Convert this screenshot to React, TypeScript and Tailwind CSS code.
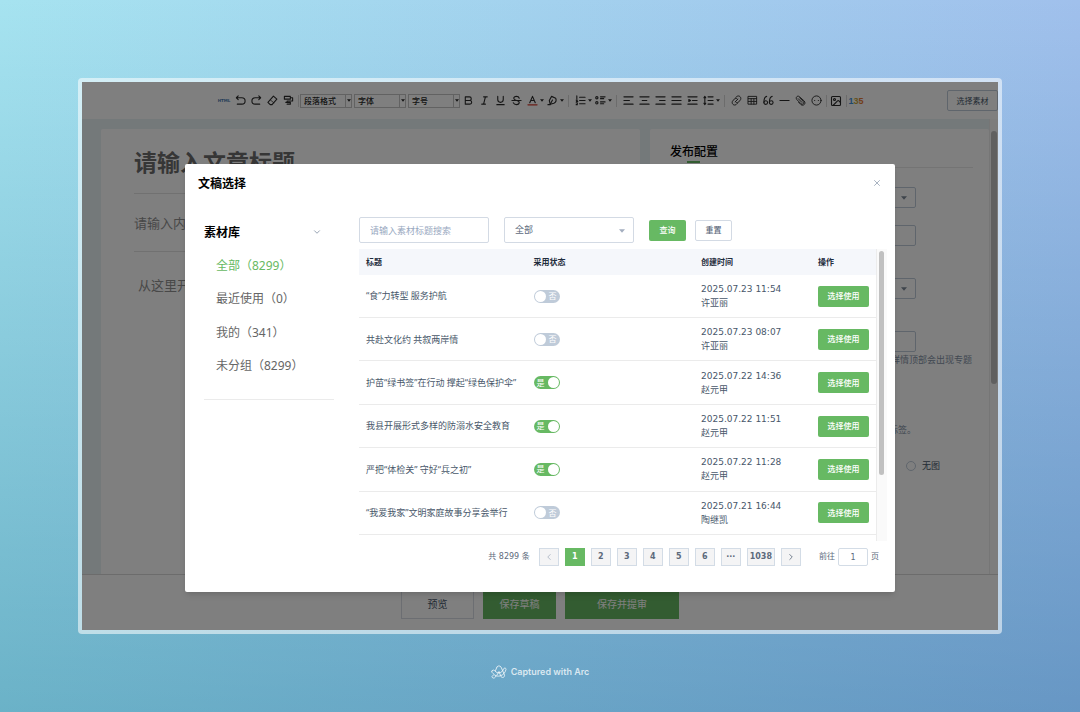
import type { ReactNode } from "react";
import {
  ChevronDown,
  ChevronLeft,
  ChevronRight,
  Image,
  X,
} from "lucide-react";

const rows = [
  { title: "“食”力转型 服务护航", used: false, time: "2025.07.23 11:54", author: "许亚丽" },
  { title: "共赴文化约 共叙两岸情", used: false, time: "2025.07.23 08:07", author: "许亚丽" },
  { title: "护苗“绿书签”在行动 撑起“绿色保护伞”", used: true, time: "2025.07.22 14:36", author: "赵元甲" },
  { title: "我县开展形式多样的防溺水安全教育", used: true, time: "2025.07.22 11:51", author: "赵元甲" },
  { title: "严把“体检关” 守好“兵之初”", used: true, time: "2025.07.22 11:28", author: "赵元甲" },
  { title: "“我爱我家”文明家庭故事分享会举行", used: false, time: "2025.07.21 16:44", author: "陶继凯" },
];

const groups = ["全部（8299）", "最近使用（0）", "我的（341）", "未分组（8299）"];

const pages = ["1", "2", "3", "4", "5", "6", "···", "1038"];

function Tool({ label, children }: { label: string; children: ReactNode }) {
  return (
    <button type="button" aria-label={label} className="flex w-4 h-4 items-center justify-center">
      {children}
    </button>
  );
}

function Glyph({ children }: { children: ReactNode }) {
  return (
    <svg
      viewBox="0 0 24 24"
      className="size-[11px] shrink-0"
      fill="none"
      stroke="currentColor"
      strokeWidth="2.4"
      strokeLinecap="round"
      strokeLinejoin="round"
    >
      {children}
    </svg>
  );
}

function Caret({ className }: { className: string }) {
  return (
    <svg viewBox="0 0 10 6" className={className} fill="currentColor">
      <path d="M0 0h10L5 6z" />
    </svg>
  );
}

function ToolCaret() {
  return (
    <span className="flex w-1 h-4 items-center justify-center">
      <Caret className="w-1 h-[3px] shrink-0" />
    </span>
  );
}

function Divider({ wide }: { wide?: boolean }) {
  return (
    <span className={wide ? "flex w-2 justify-center" : "flex w-1 justify-center"}>
      <span className="w-px h-3 bg-[#d8d8d8]" />
    </span>
  );
}

function ToolSelect({ label }: { label: string }) {
  return (
    <span className="relative flex w-[52px] h-[14px] border border-[#c4c4c4]">
      <select aria-label={label} className="w-full appearance-none pl-[3px] text-[8px] leading-3 font-medium">
        <option>{label}</option>
      </select>
      <span className="pointer-events-none absolute inset-y-0 right-0 flex w-[6px] items-center justify-center border-l border-[#c4c4c4]">
        <Caret className="w-1 h-[3px]" />
      </span>
    </span>
  );
}

function Toolbar() {
  return (
    <div className="flex h-[37px] shrink-0 items-center justify-between bg-white pl-[134px] text-[#2a2a2a]">
      <div className="flex items-center">
        <button type="button" className="w-4 text-center font-['DejaVu_Sans',sans-serif] text-[4px] font-bold text-[#4a7ab0]">
          HTML
        </button>
        <Tool label="撤销">
          <Glyph><path d="M7 2 3 6l4 4M3 6h12a7 7 0 0 1 0 14H5" /></Glyph>
        </Tool>
        <Tool label="重做">
          <Glyph><path d="m17 2 4 4-4 4M21 6H9a7 7 0 0 0 0 14h10" /></Glyph>
        </Tool>
        <Tool label="清除格式">
          <Glyph>
            <path d="M14 2.500 21.500 9 11 21H7l-5-5z" />
            <path d="m7.500 11 7.500 6" strokeWidth="1.6" />
          </Glyph>
        </Tool>
        <Tool label="格式刷">
          <Glyph><path d="M3 3h13v6H3zM16 6h5v7H9v3M6 16h10v4H9" /></Glyph>
        </Tool>
        <Divider />
        <div className="flex gap-0.5">
          <ToolSelect label="段落格式" />
          <ToolSelect label="字体" />
          <ToolSelect label="字号" />
        </div>
        <Tool label="加粗">
          <Glyph><path d="M5 4h9a4 4 0 0 1 0 8H5zM5 12h10a4 4 0 0 1 0 8H5z" /></Glyph>
        </Tool>
        <Tool label="斜体">
          <Glyph><path d="M10 4h8M6 20h8M14 4l-4 16" /></Glyph>
        </Tool>
        <Tool label="下划线">
          <Glyph><path d="M6 3v7a6 6 0 0 0 12 0V3M4 21h16" /></Glyph>
        </Tool>
        <Tool label="删除线">
          <Glyph><path d="M18 7c-1-3-4-4-6-4-4 0-6 2-6 4 0 3 3 4 6 5h1c3 1 5 2 5 4 0 3-3 5-6 5-4 0-6-2-7-4M2 12h20" /></Glyph>
        </Tool>
        <Tool label="字体颜色">
          <Glyph>
            <path d="M6 17 12 3l6 14M8 12h8" />
            <path d="M2 21.500h20" stroke="#d33a2c" />
          </Glyph>
        </Tool>
        <ToolCaret />
        <Tool label="背景颜色">
          <Glyph>
            <path d="M10 3 19 7c2 5 0 9-4 11l-8 2-2-8z" />
            <path d="m7 20 5-9M2 21h5" />
          </Glyph>
        </Tool>
        <ToolCaret />
        <Divider wide />
        <Tool label="有序列表">
          <Glyph><path d="M10 5h12M10 12h12M10 19h12M4 2v6M2.500 11H5l-2 3h3M2.500 17H5v4H2.500" /></Glyph>
        </Tool>
        <ToolCaret />
        <Tool label="无序列表">
          <Glyph>
            <path d="M12 4h10M12 8h7M12 15h10M12 19h7" />
            <circle cx="4" cy="6" r="2.500" />
            <circle cx="4" cy="17" r="2.500" />
          </Glyph>
        </Tool>
        <ToolCaret />
        <Divider wide />
        <Tool label="左对齐"><Glyph><path d="M2 4h20M2 12h12M2 20h20" /></Glyph></Tool>
        <Tool label="居中"><Glyph><path d="M2 4h20M7 12h10M2 20h20" /></Glyph></Tool>
        <Tool label="右对齐"><Glyph><path d="M2 4h20M10 12h12M2 20h20" /></Glyph></Tool>
        <Tool label="两端对齐"><Glyph><path d="M2 4h20M2 12h20M2 20h20" /></Glyph></Tool>
        <Tool label="缩进"><Glyph><path d="M2 4h20M12 12h10M2 20h20M4 10v4l4-2z" /></Glyph></Tool>
        <Tool label="行高"><Glyph><path d="M11 4h11M11 12h11M11 20h11M4 4v16M2 6l2-3 2 3M2 18l2 3 2-3" /></Glyph></Tool>
        <ToolCaret />
        <Divider wide />
        <Tool label="链接">
          <Glyph>
            <path d="m9 15 6-6M10 6l3-3c5-3 10 2 8 7l-4 5c-2 2-4 2-6 1M14 18l-3 3c-5 3-10-2-8-7l4-5c2-2 4-2 6-1" strokeWidth="2" />
          </Glyph>
        </Tool>
        <Tool label="表格">
          <Glyph><path d="M3 3h18v17H3zM3 8h18M3 14h18M9 8v12M15 8v12" strokeWidth="2" /></Glyph>
        </Tool>
        <Tool label="引用">
          <Glyph>
            <circle cx="6" cy="16.500" r="4" />
            <circle cx="18" cy="16.500" r="4" />
            <path d="M2 16c0-7 1-12 6-13M14 16c0-7 1-12 6-13" />
          </Glyph>
        </Tool>
        <Tool label="分割线"><Glyph><path d="M2 12h20" /></Glyph></Tool>
        <Tool label="附件">
          <Glyph>
            <path d="m10 6 8 8c3 4-1 8-5 5L4 10C0 5 6 0 10 4l10 9c5 6-2 12-7 8l-5-5M7 8l8 8" strokeWidth="2" />
          </Glyph>
        </Tool>
        <Tool label="表情">
          <Glyph>
            <circle cx="12" cy="12" r="10" strokeWidth="2" />
            <path d="M8 12h.1M16 12h.1" />
          </Glyph>
        </Tool>
        <Divider />
        <Tool label="图片"><Image className="size-3" strokeWidth={2.2} /></Tool>
        <Divider />
        <button type="button" aria-label="135编辑器" className="flex w-4 justify-center font-['Liberation_Sans_Narrow','Liberation_Sans',sans-serif] text-[9px] leading-3 font-bold">
          <span className="text-[#3f8fd8]">1</span>
          <span className="text-[#c9a53c]">3</span>
          <span className="text-[#e57a35]">5</span>
        </button>
      </div>
      <button type="button" className="h-[21px] w-[51px] rounded-xs border border-[#bfcbd9] text-[8px] text-[#48576a]">
        选择素材
      </button>
    </div>
  );
}

function Editor() {
  return (
    <section className="min-w-0 flex-1 rounded-t-xs bg-white px-[33px]">
      <input
        aria-label="文章标题"
        placeholder="请输入文章标题"
        className="block h-[65px] w-full border-b border-[#e2e2e2] text-[23px] font-bold placeholder:text-[#6c6c6c]"
      />
      <input
        aria-label="内容摘要"
        placeholder="请输入内容摘要"
        className="block h-[58px] w-full border-b border-[#e2e2e2] text-[13px] placeholder:text-[#909090]"
      />
      <textarea
        aria-label="正文"
        placeholder="从这里开始写正文"
        className="mt-[23px] block h-40 w-full resize-none px-1 text-[13px] leading-5 placeholder:text-[#909090]"
      />
    </section>
  );
}

function FieldSelect({ label }: { label: string }) {
  return (
    <span className="relative flex h-[21px] rounded-xs border border-[#bfcbd9]">
      <select aria-label={label} className="w-full appearance-none" />
      <Caret className="pointer-events-none absolute top-2 right-2 w-[6px] h-1 text-[#7d8897]" />
    </span>
  );
}

function Settings() {
  return (
    <section className="w-[339px] rounded-t-xs bg-white pl-5 text-[9px] text-[#48576a]">
      <div className="mr-4 flex h-[39px] flex-col justify-end border-b border-[#e8e8e8]">
        <h2 className="text-[12px] leading-5 font-medium text-black">发布配置</h2>
        <div className="mb-1 ml-[17px] h-0.5 w-[13px] bg-[#67b963]" />
      </div>
      <div className="flex w-[246px] flex-col pt-[19px]">
        <FieldSelect label="栏目" />
        <input aria-label="作者" className="mt-[17px] h-[21px] rounded-xs border border-[#bfcbd9]" />
        <div className="mt-8" />
        <FieldSelect label="专题" />
        <input aria-label="专题名称" className="mt-8 h-[21px] rounded-xs border border-[#bfcbd9]" />
      </div>
      <p className="w-[302px] text-right leading-4 text-[#8391a5]">详情顶部会出现专题</p>
      <p className="mt-[54px] w-[246px] text-right leading-4 text-[#8391a5]">标签。</p>
      <label className="mt-5 ml-[236px] flex items-center gap-1.5 leading-4">
        <input type="radio" name="cover" className="size-[10px] appearance-none rounded-full border border-[#bfcbd9]" />
        无图
      </label>
    </section>
  );
}

function Switch({ title, on }: { title: string; on: boolean }) {
  return (
    <label
      className={
        on
          ? "flex h-[13px] w-[26px] flex-row-reverse items-center justify-between rounded-full bg-[#67b963] px-px text-[8px] text-white"
          : "flex h-[13px] w-[26px] items-center justify-between rounded-full bg-[#bfcbd9] px-px text-[8px] text-white"
      }
    >
      <input
        type="checkbox"
        aria-label={title}
        defaultChecked={on}
        className="size-[11px] appearance-none rounded-full bg-white"
      />
      <span className="w-3 text-center leading-3">{on ? "是" : "否"}</span>
    </label>
  );
}

function Sidebar() {
  return (
    <aside className="h-[183px] w-[130px] shrink-0 border-b border-[#ebebeb]">
      <div className="flex h-[30px] items-center justify-between pr-3">
        <h3 className="text-[12px] font-bold text-black">素材库</h3>
        <ChevronDown className="size-[10px] text-[#8391a5]" strokeWidth={2} />
      </div>
      <ul className="mt-0.5 grid h-[134px] grid-rows-4 pl-3 font-['Noto_Sans','Noto_Sans_CJK_SC',sans-serif] text-[12px]">
        {groups.map((group, i) => (
          <li key={group} className="flex items-center">
            <button type="button" className={i === 0 ? "text-[#67b963]" : "text-[#666666]"}>
              {group}
            </button>
          </li>
        ))}
      </ul>
    </aside>
  );
}

function Filters() {
  return (
    <form className="flex items-center">
      <input
        aria-label="素材标题"
        placeholder="请输入素材标题搜索"
        className="h-[26px] w-[130px] rounded-xs border border-[#d3dae4] px-[10px] text-[9px] placeholder:text-[#99a9bf]"
      />
      <span className="relative ml-[15px] flex h-[26px] w-[130px] rounded-xs border border-[#d3dae4] text-[#5d6a7c]">
        <select aria-label="分类" className="w-full appearance-none px-[10px] text-[9px]">
          <option>全部</option>
        </select>
        <Caret className="pointer-events-none absolute top-[11px] right-2 h-1 w-[6px] text-[#a3aebf]" />
      </span>
      <button type="button" className="ml-[15px] h-[21px] w-[37px] rounded-xs bg-[#67b963] text-[8px] font-medium text-white">
        查询
      </button>
      <button type="button" className="ml-[9px] h-[21px] w-[37px] rounded-xs border border-[#d3dae4] text-[8px] font-medium text-[#5d6a7c]">
        重置
      </button>
    </form>
  );
}

function ArticleTable() {
  return (
    <div className="mt-[6px] flex h-[292px]">
      <div className="min-w-0 flex-1">
        <table className="h-[286px] w-full table-fixed border-collapse text-left text-[9px] text-[#48576a]">
          <thead>
            <tr className="h-[26px] bg-[#f5f7fb] text-[8px] text-[#1f2d3d]">
              <th className="pl-[7px]">标题</th>
              <th className="pl-[7px]">采用状态</th>
              <th className="w-[117px] pl-[7px]">创建时间</th>
              <th className="w-[65px] pl-[7px]">操作</th>
            </tr>
          </thead>
          <tbody>
            {rows.map((row) => (
              <tr key={row.time} className="border-b border-[#ebebeb]">
                <td className="pl-[7px] font-['Noto_Sans','Noto_Sans_CJK_SC',sans-serif] whitespace-nowrap">{row.title}</td>
                <td className="pl-[7px]">
                  <Switch title={row.title} on={row.used} />
                </td>
                <td className="pl-[7px] leading-[13px]">
                  <div className="font-['DejaVu_Sans',sans-serif]">{row.time}</div>
                  <div>{row.author}</div>
                </td>
                <td className="pl-[7px]">
                  <button type="button" className="block h-[21px] w-[51px] rounded-xs bg-[#67b963] text-[8px] font-medium text-white">
                    选择使用
                  </button>
                </td>
              </tr>
            ))}
          </tbody>
        </table>
      </div>
      <div className="w-[11px] border-l border-[#ececec] bg-[#fafafa] px-0.5 pt-0.5">
        <div className="h-56 w-[5px] rounded-full bg-[#c1c1c1]" />
      </div>
    </div>
  );
}

function Pagination() {
  return (
    <nav className="mt-[7px] flex h-[18px] items-center justify-end font-['DejaVu_Sans','Noto_Sans_CJK_SC',sans-serif] text-[8px] text-[#5d6a7c]">
      <span className="mr-[9px]">共 8299 条</span>
      <div className="flex gap-1.5">
        <button type="button" aria-label="上一页" className="flex h-[18px] w-5 items-center justify-center border border-[#d3dce6] bg-[#f4f4f5] text-[#a8b3c2]">
          <ChevronLeft className="size-[10px]" />
        </button>
        {pages.map((page) => (
          <button
            key={page}
            type="button"
            className={
              page === "1"
                ? "h-[18px] min-w-5 bg-[#67b963] font-bold text-white"
                : "h-[18px] min-w-5 border border-[#d3dce6] bg-[#f4f4f5] px-0.5 font-bold text-[#5d6a7c]"
            }
          >
            {page}
          </button>
        ))}
        <button type="button" aria-label="下一页" className="flex h-[18px] w-5 items-center justify-center border border-[#d3dce6] bg-[#f4f4f5]">
          <ChevronRight className="size-[10px]" />
        </button>
      </div>
      <label className="ml-[18px] flex items-center gap-[3px]">
        前往
        <input defaultValue="1" className="h-[18px] w-[30px] rounded-xs border border-[#d3dce6] text-center" />
        页
      </label>
    </nav>
  );
}

function PickerDialog() {
  return (
    <div role="dialog" aria-label="文稿选择" className="rounded-xs bg-white pb-[26px] shadow-md">
      <header className="flex h-[38px] items-center justify-between px-[13px]">
        <h2 className="text-[12px] font-bold text-black">文稿选择</h2>
        <button type="button" aria-label="关闭">
          <X className="size-[10px] text-[#97a3b4]" strokeWidth={2} />
        </button>
      </header>
      <div className="flex gap-[25px] pt-[15px] pr-2 pl-[19px]">
        <Sidebar />
        <div className="min-w-0 flex-1">
          <Filters />
          <ArticleTable />
        </div>
      </div>
      <div className="pr-4">
        <Pagination />
      </div>
    </div>
  );
}

function ArcMark() {
  return (
    <svg viewBox="0 0 32 28" className="h-[14px] w-4" fill="none" stroke="currentColor" strokeWidth="2" strokeLinejoin="round" strokeLinecap="round">
      <path d="M12 4c1-3 6-3 8 0l7 16c1 4-4 7-7 3l-4-10-4 7" />
      <path d="M12 4 9 11M5 20l-3 3c0 4 5 4 7 1l1-2" />
      <path d="M2 12c2-3 4-2 6 0 5 6 14 5 17-4 1-3 6-2 5 1-3 13-18 18-26 8-2-2-3-3-2-5z" />
    </svg>
  );
}

export default function App() {
  return (
    <main className="flex min-h-screen flex-col bg-[linear-gradient(to_bottom,#ffffff,#a4c8d4),linear-gradient(to_right,#a6e3f0,#a0c0ec)] bg-blend-multiply px-[78px] pt-[78px] font-['Noto_Sans_CJK_SC',sans-serif]">
      <div className="relative flex h-[556px] flex-col overflow-hidden rounded-sm border-4 border-white/55 bg-white bg-clip-padding">
        <Toolbar />
        <div className="flex min-h-0 flex-1 bg-[#e9f2f5]">
          <div className="flex min-w-0 flex-1 gap-[10px] pt-[10px] pl-[19px]">
            <Editor />
            <Settings />
          </div>
          <div className="w-[9px] border-l border-[#ececec] bg-[#fafafa] pt-3 pl-px">
            <div className="h-[253px] w-[6px] rounded-full bg-[#c1c1c1]" />
          </div>
        </div>
        <footer className="flex h-14 shrink-0 items-end justify-center gap-[9px] border-t border-[#d8d8d8] bg-white pb-[11px] text-[10px]">
          <button type="button" className="h-8 w-[73px] border border-[#d8dde5] text-[#48576a]">预览</button>
          <button type="button" className="h-8 w-[73px] bg-[#67b963] text-white">保存草稿</button>
          <button type="button" className="h-8 w-[114px] bg-[#67b963] text-white">保存并提审</button>
        </footer>
        <div className="absolute inset-0 bg-black/50 px-[103px] pt-[82px]">
          <PickerDialog />
        </div>
      </div>
      <footer className="flex flex-1 items-center justify-center gap-1 pb-0.5 font-['Inter',sans-serif] text-[9px] font-semibold text-white/75">
        <ArcMark />
        Captured with Arc
      </footer>
    </main>
  );
}
